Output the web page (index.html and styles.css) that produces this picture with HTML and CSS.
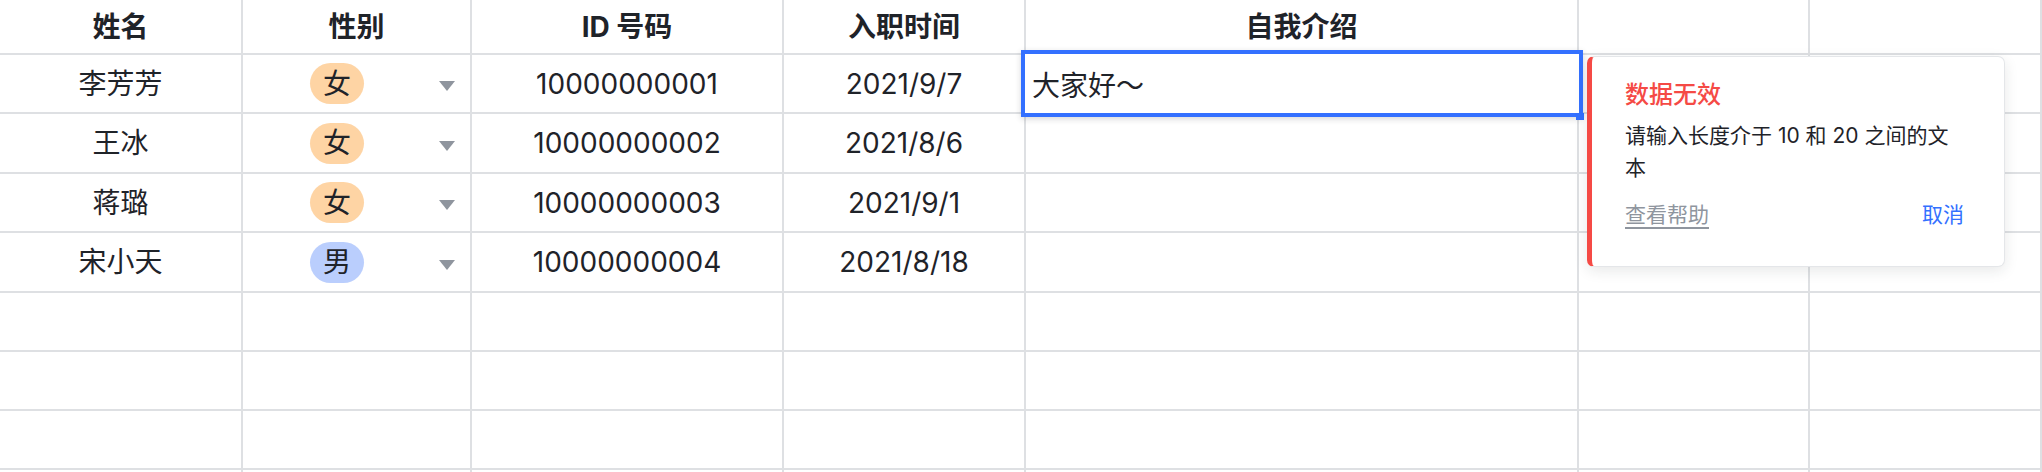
FILE: index.html
```html
<!DOCTYPE html>
<html lang="zh-CN">
<head>
<meta charset="utf-8">
<title>表格</title>
<link rel="stylesheet" href="styles.css">
</head>
<body>
<div class="sheet">
  <div class="grid">
    <div class="cell head">姓名</div>
    <div class="cell head">性别</div>
    <div class="cell head">ID 号码</div>
    <div class="cell head">入职时间</div>
    <div class="cell head">自我介绍</div>
    <div class="cell head"></div>
    <div class="cell head"></div>

    <div class="cell">李芳芳</div>
    <div class="cell select"><span class="pill female">女</span><span class="caret"></span></div>
    <div class="cell">10000000001</div>
    <div class="cell">2021/9/7</div>
    <div class="cell"></div>
    <div class="cell"></div>
    <div class="cell"></div>

    <div class="cell">王冰</div>
    <div class="cell select"><span class="pill female">女</span><span class="caret"></span></div>
    <div class="cell">10000000002</div>
    <div class="cell">2021/8/6</div>
    <div class="cell"></div>
    <div class="cell"></div>
    <div class="cell"></div>

    <div class="cell">蒋璐</div>
    <div class="cell select"><span class="pill female">女</span><span class="caret"></span></div>
    <div class="cell">10000000003</div>
    <div class="cell">2021/9/1</div>
    <div class="cell"></div>
    <div class="cell"></div>
    <div class="cell"></div>

    <div class="cell">宋小天</div>
    <div class="cell select"><span class="pill male">男</span><span class="caret"></span></div>
    <div class="cell">10000000004</div>
    <div class="cell">2021/8/18</div>
    <div class="cell"></div>
    <div class="cell"></div>
    <div class="cell"></div>

    <div class="cell"></div><div class="cell"></div><div class="cell"></div><div class="cell"></div><div class="cell"></div><div class="cell"></div><div class="cell"></div>
    <div class="cell"></div><div class="cell"></div><div class="cell"></div><div class="cell"></div><div class="cell"></div><div class="cell"></div><div class="cell"></div>
    <div class="cell"></div><div class="cell"></div><div class="cell"></div><div class="cell"></div><div class="cell"></div><div class="cell"></div><div class="cell"></div>
    <div class="cell tail"></div><div class="cell tail"></div><div class="cell tail"></div><div class="cell tail"></div><div class="cell tail"></div><div class="cell tail"></div><div class="cell tail"></div>
  </div>

  <div class="editor">大家好～</div>
  <div class="handle"></div>

  <div class="popup">
    <div class="popup-title">数据无效</div>
    <div class="popup-body">请输入长度介于 10 和 20 之间的文本</div>
    <div class="popup-foot">
      <span class="help">查看帮助</span>
      <span class="cancel">取消</span>
    </div>
  </div>
</div>
</body>
</html>
```

FILE: styles.css
```css
html, body {
  margin: 0;
  padding: 0;
  background: #ffffff;
}

body {
  width: 2042px;
  height: 472px;
  overflow: hidden;
  font-family: Inter, "Noto Sans CJK SC", sans-serif;
  color: #1f2329;
}

.sheet {
  position: relative;
  width: 2042px;
  height: 472px;
  overflow: hidden;
}

.grid {
  display: grid;
  height: 472px;
  grid-template-columns: 243px 229px 312px 242px 553px 231px 1fr;
  grid-template-rows: 55px 59px 60px 59px 60px 59px 59px 59px 2px;
}

.cell {
  box-sizing: border-box;
  border-right: 2px solid #dee0e3;
  border-bottom: 2px solid #dee0e3;
  display: flex;
  align-items: center;
  justify-content: center;
  font-size: 28px;
  line-height: 1;
  white-space: nowrap;
}

.tail {
  border-bottom: none;
}

.head {
  font-weight: 700;
}

.select {
  justify-content: space-between;
  padding: 0 15px 0 67px;
}

.pill {
  display: inline-flex;
  align-items: center;
  justify-content: center;
  width: 54px;
  height: 41px;
  border-radius: 21px;
  font-size: 28px;
}

.female {
  background: #fed4a4;
}

.male {
  background: #bacefd;
}

.caret {
  width: 0;
  height: 0;
  margin-top: 5px;
  border-left: 8.5px solid transparent;
  border-right: 8.5px solid transparent;
  border-top: 10px solid #8f959e;
}

.editor {
  position: absolute;
  left: 1021px;
  top: 50px;
  width: 562px;
  height: 67px;
  box-sizing: border-box;
  border: 4px solid #3370ff;
  background: #ffffff;
  box-shadow: 0 2px 6px rgba(31, 35, 41, 0.18);
  display: flex;
  align-items: center;
  padding-left: 7px;
  font-size: 28px;
}

.handle {
  position: absolute;
  left: 1576px;
  top: 113px;
  width: 8px;
  height: 7px;
  background: #3370ff;
}

.popup {
  position: absolute;
  left: 1587px;
  top: 56px;
  width: 418px;
  box-sizing: border-box;
  background: #ffffff;
  border: 1px solid #e4e6e9;
  border-left: 5px solid #f54a45;
  border-radius: 7px;
  box-shadow: 0 4px 14px rgba(31, 35, 41, 0.10);
  padding: 22px 40px 35px 33px;
}

.popup-title {
  color: #f54a45;
  font-size: 24px;
  font-weight: 500;
  line-height: 32px;
}

.popup-body {
  margin-top: 9px;
  font-size: 21px;
  line-height: 32px;
  color: #1f2329;
}

.popup-foot {
  margin-top: 15px;
  display: flex;
  justify-content: space-between;
  align-items: center;
  font-size: 21px;
  line-height: 32px;
}

.help {
  color: #8f959e;
  text-decoration: underline;
  text-decoration-thickness: 2px;
  text-underline-offset: 5px;
}

.cancel {
  color: #3370ff;
}
```
